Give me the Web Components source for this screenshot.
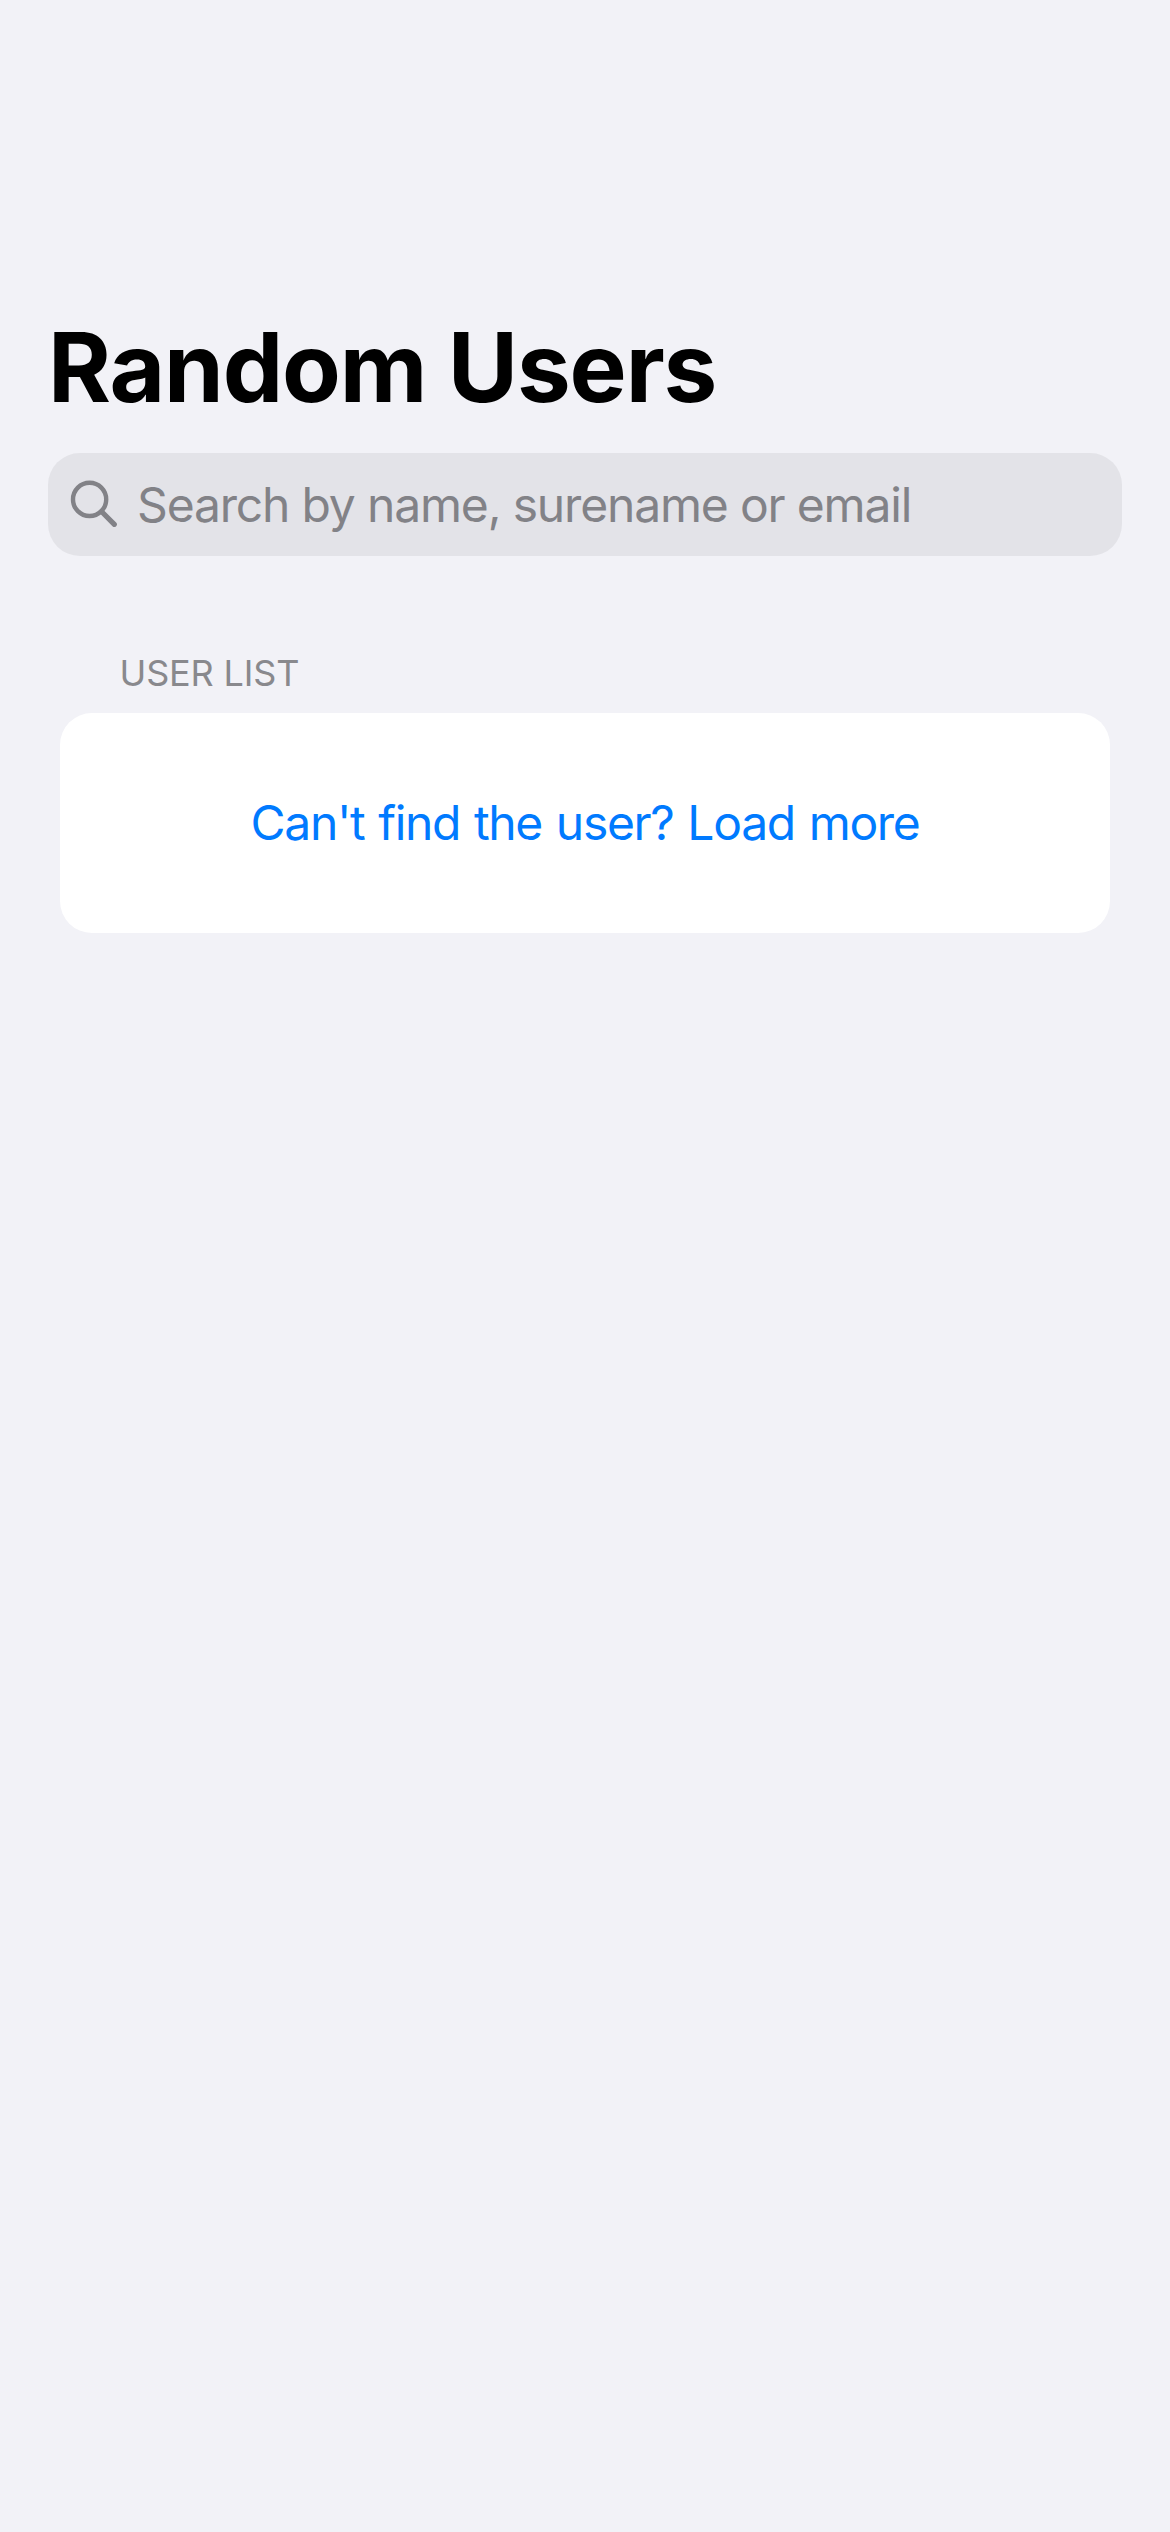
<!DOCTYPE html>
<html lang="en"><head><meta charset="utf-8"><title>Random Users</title>
<style>html,body{margin:0;background:#f2f2f7}</style></head><body>
<users-screen>
  <large-title>Random Users</large-title>
  <search-field>Search by name, surename or email</search-field>
  <list-section>
    <span slot="header">USER LIST</span>
    <load-more>Can't find the user? Load more</load-more>
  </list-section>
</users-screen>
<script>
const define = (name, markup) => customElements.define(name, class extends HTMLElement {
  constructor() {
    super();
    this.attachShadow({ mode: 'open' }).innerHTML = markup;
  }
});
define('users-screen', `<style>
  :host{display:flex;flex-direction:column;box-sizing:border-box;width:1170px;height:2532px;padding:307px 48px 0;background:#f2f2f7;font-family:Inter,"Liberation Sans",sans-serif;white-space:nowrap}
</style><slot></slot>`);
define('large-title', `<style>
  :host{display:block}
  h1{margin:0;font-size:96px;font-weight:700;line-height:120px;letter-spacing:-1.14px;color:#000}
</style><h1><slot></slot></h1>`);
define('search-field', `<style>
  :host{display:flex;align-items:flex-start;box-sizing:border-box;height:103px;margin-top:26px;padding:22px 0 0 18px;gap:11px;border-radius:32px;background:#e3e3e8;color:#828287;font-size:48px;line-height:59px;letter-spacing:-1.17px}
  svg{flex:none;width:60px;height:60px}
</style><svg viewBox="66 475 60 60" fill="none" stroke="currentColor"><circle cx="89.6" cy="499.4" r="16.6" stroke-width="4.4"/><path d="M101.5 511.5L114.3 524.3" stroke-width="5.2" stroke-linecap="round"/></svg><span><slot></slot></span>`);
define('list-section', `<style>
  :host{display:flex;flex-direction:column;gap:18px;margin:95px 12px 0}
  header{padding-left:59.5px;font-size:36px;line-height:44px;letter-spacing:-.15px;color:#89898d}
  section{box-sizing:border-box;height:220px;padding-top:80px;border-radius:32px;background:#fff}
</style><header><slot name="header"></slot></header><section><slot></slot></section>`);
define('load-more', `<style>
  :host{display:flex;justify-content:center;color:#007aff;font-size:48px;line-height:59px;letter-spacing:-1.31px;word-spacing:1.6px}
</style><span><slot></slot></span>`);
</script></body></html>
